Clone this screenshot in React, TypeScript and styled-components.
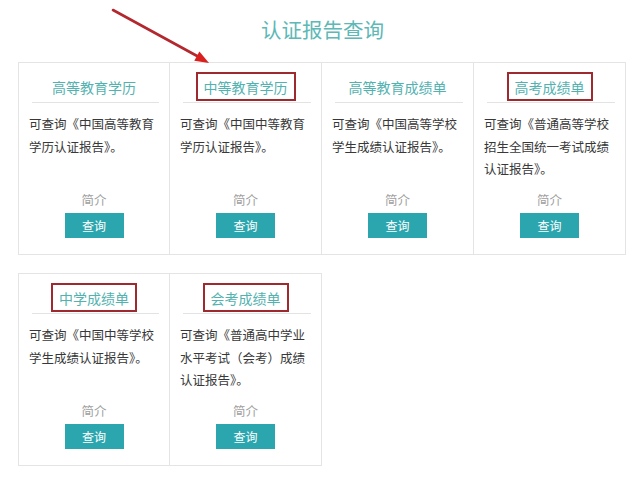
import React from "react";
import styled, { createGlobalStyle } from "styled-components";

const GlobalStyle = createGlobalStyle`
  html, body { margin: 0; padding: 0; background: #ffffff; }
  body { font-family: "Noto Sans CJK SC", "Noto Sans", sans-serif; }
`;

const Page = styled.div`
  position: relative;
  width: 640px;
  height: 481px;
  padding: 0 13px 0 18px;
  box-sizing: border-box;
  background: #ffffff;
  overflow: hidden;
`;

const Heading = styled.h1`
  margin: 0 0 20px 0;
  padding-top: 16px;
  width: 609px;
  text-align: center;
  font-size: 20.5px;
  line-height: 26px;
  font-weight: 400;
  color: #5db8b6;
`;

const Rows = styled.div`
  display: flex;
  flex-direction: column;
  gap: 18px;
`;

const Grid = styled.div`
  display: grid;
  grid-template-columns: repeat(4, 152px);
`;

const Card = styled.div`
  height: 193px;
  box-sizing: border-box;
  border-top: 1px solid #e4e4e4;
  border-bottom: 1px solid #e4e4e4;
  border-right: 1px solid #e4e4e4;
  &:first-child {
    border-left: 1px solid #e4e4e4;
  }
  display: flex;
  flex-direction: column;
  background: #ffffff;
`;

const CardTitle = styled.div`
  padding-top: 14px;
  text-align: center;
  font-size: 14px;
  line-height: 20px;
  color: #52b2b0;
`;

const Mark = styled.span<{ $on: boolean }>`
  padding: ${(p) => (p.$on ? "3px 6px 2px" : "0")};
  border: ${(p) => (p.$on ? "2px solid #9e2a30" : "none")};
`;

const Divider = styled.div`
  margin: 5px 10px 0 13px;
  height: 1px;
  background: #e3e3e3;
`;

const Desc = styled.p`
  flex: 1;
  margin: 10px 0 0 0;
  padding: 0 10px 0 10px;
  font-size: 12.5px;
  line-height: 22.5px;
  color: #383838;
`;

const Footer = styled.div`
  display: flex;
  flex-direction: column;
  align-items: center;
  gap: 4px;
  padding-bottom: 16px;
`;

const Intro = styled.span`
  font-size: 12.5px;
  line-height: 18px;
  color: #a0a0a0;
`;

const QueryButton = styled.button`
  width: 59px;
  height: 25px;
  border: none;
  padding: 0;
  background: #2ca6ae;
  color: #ffffff;
  font-family: inherit;
  font-size: 12px;
  line-height: 25px;
  cursor: pointer;
`;

const ArrowLayer = styled.svg`
  position: absolute;
  left: 0;
  top: 0;
  pointer-events: none;
`;

type Item = { title: string; desc: string; marked: boolean };

const rows: Item[][] = [
  [
    { title: "高等教育学历", desc: "可查询《中国高等教育学历认证报告》。", marked: false },
    { title: "中等教育学历", desc: "可查询《中国中等教育学历认证报告》。", marked: true },
    { title: "高等教育成绩单", desc: "可查询《中国高等学校学生成绩认证报告》。", marked: false },
    { title: "高考成绩单", desc: "可查询《普通高等学校招生全国统一考试成绩认证报告》。", marked: true },
  ],
  [
    { title: "中学成绩单", desc: "可查询《中国中等学校学生成绩认证报告》。", marked: true },
    { title: "会考成绩单", desc: "可查询《普通高中学业水平考试（会考）成绩认证报告》。", marked: true },
  ],
];

const ReportCard: React.FC<{ item: Item }> = ({ item }) => (
  <Card>
    <CardTitle>
      <Mark $on={item.marked}>{item.title}</Mark>
    </CardTitle>
    <Divider />
    <Desc>{item.desc}</Desc>
    <Footer>
      <Intro>简介</Intro>
      <QueryButton>查询</QueryButton>
    </Footer>
  </Card>
);

export default function App() {
  return (
    <>
      <GlobalStyle />
      <Page>
        <Heading>认证报告查询</Heading>
        <Rows>
          {rows.map((row, i) => (
            <Grid key={i}>
              {row.map((it) => (
                <ReportCard key={it.title} item={it} />
              ))}
            </Grid>
          ))}
        </Rows>
        <ArrowLayer width="640" height="481" viewBox="0 0 640 481">
          <line x1="113" y1="10" x2="198" y2="56.5" stroke="#b3282e" strokeWidth="2.6" strokeLinecap="round" />
          <polygon points="209,63 194.3,60.8 199.4,51.6" fill="#d9201f" />
        </ArrowLayer>
      </Page>
    </>
  );
}
